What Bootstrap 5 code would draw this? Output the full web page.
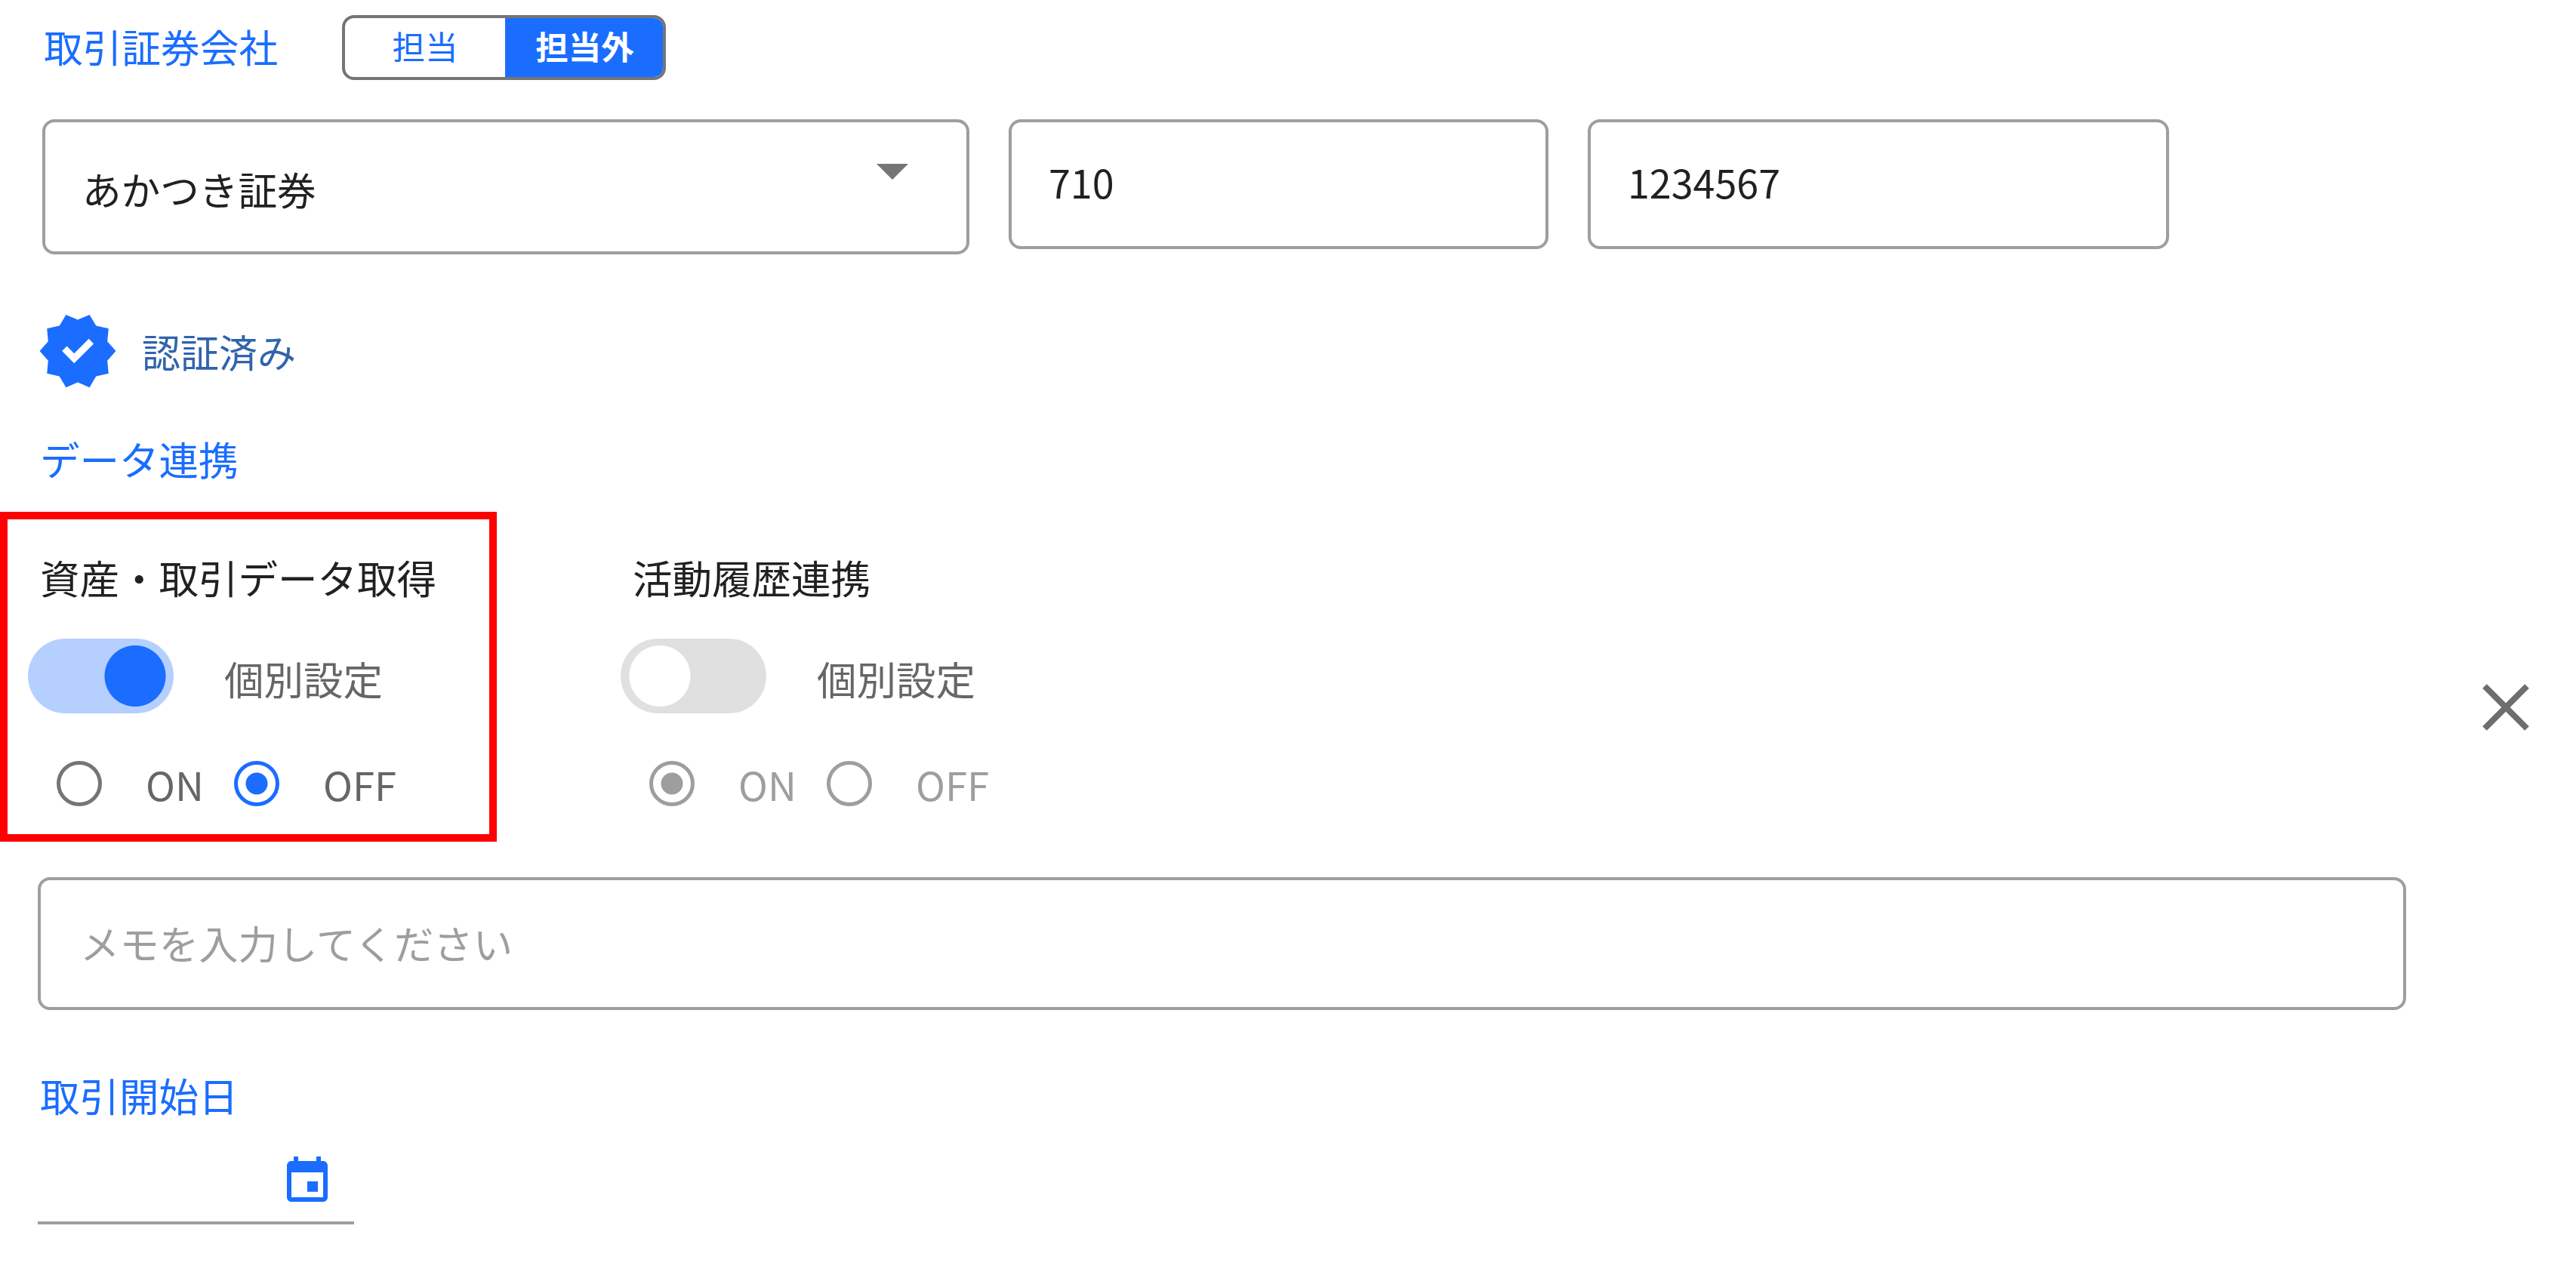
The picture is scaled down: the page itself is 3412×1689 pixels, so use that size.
<!DOCTYPE html>
<html lang="ja">
<head>
    <meta charset="UTF-8">
    <meta name="viewport" content="width=device-width, initial-scale=1.0">
    <title>取引証券会社</title>
    <link href="https://cdn.jsdelivr.net/npm/bootstrap@5.3.3/dist/css/bootstrap.min.css" rel="stylesheet">
    <style>
        body {
            font-family: "Noto Sans CJK JP", "Noto Sans", sans-serif;
            font-size: 52.5px;
            line-height: 60px;
            color: #212121;
            background-color: #fff;
            overflow: hidden;
        }

        .form-area {
            width: 3187px;
            padding-top: 20px;
        }

        .section-title {
            font-size: inherit;
            line-height: 60px;
            font-weight: 400;
            color: #1a6dff;
            margin: 0;
        }

        /* 担当 / 担当外 */
        .company-head {
            height: 86px;
            padding-left: 58px;
        }
        .company-head .section-title {
            width: 395px;
            font-size: 51.7px;
            padding-bottom: 4px;
        }
        .tanto-toggle {
            width: 429px;
            height: 86px;
            border: 4px solid #757575;
            border-radius: 16px;
            overflow: hidden;
        }
        .tanto-toggle .btn {
            width: 212px;
            border: 0;
            border-radius: 0;
            padding: 0 0 4px;
            font-size: 43.5px;
            line-height: 72px;
            color: #1a6dff;
        }
        .tanto-toggle .btn.active {
            width: 209px;
            background-color: #1a6dff;
            color: #fff;
            font-weight: 700;
            padding-left: 2px;
        }

        .company-row {
            margin-top: 52px;
            padding-left: 56px;
            gap: 52px;
        }
        .company-select,
        .field-box {
            border: 4px solid #9e9e9e;
            border-radius: 16px;
            font-size: 52px;
            color: #212121;
            background-color: #fff;
        }
        .company-select {
            width: 1228px;
            height: 179px;
            font-size: 51.6px;
            padding: 4px 77px 0 49px;
        }
        .company-select svg {
            width: 42px;
            height: 21px;
            margin-top: -45px;
        }
        .field-box {
            height: 172px;
            padding: 0 49px 8px;
        }
        .field-branch { width: 715px; }
        .field-account { width: 770px; }

        .verified-row {
            height: 110px;
            margin-top: 73px;
            padding-left: 48px;
            gap: 30px;
            font-size: 51px;
            color: #3163ad;
        }

        .link-title {
            margin-top: 57px;
            padding-left: 53px;
        }

        /* データ連携 */
        .link-row {
            margin-top: 41px;
            gap: 127px;
        }
        .link-panel {
            width: 658px;
            height: 437px;
            border: 10px solid transparent;
            padding: 46px 0 0 27px;
        }
        .link-panel.highlight { border-color: #f00; }
        .link-panel h3 {
            font-size: 52.5px;
            line-height: 60px;
            font-weight: 400;
            margin: 0 0 52px 16px;
            white-space: nowrap;
        }
        .switch-line {
            height: 99px;
            gap: 67px;
            color: #666;
        }
        .switch-line .form-check-input {
            width: 193px;
            height: 99px;
            margin: 0;
            border: 0;
            border-radius: 50px;
            background-color: #e0e0e0;
            background-image: radial-gradient(circle at 52px 50%, #fff 40px, transparent 41px);
            background-position: 0 0;
            background-size: 100% 100%;
        }
        .switch-line .form-check-input:checked {
            background-color: #b5cfff;
            background-image: radial-gradient(circle at 142px 50%, #1a6dff 40px, transparent 41px);
        }
        .radio-line {
            margin: 63px 0 0 38px;
            color: #666;
        }
        .radio-line .form-check {
            width: 235px;
            height: 60px;
            min-height: 0;
            padding: 0;
            margin: 0;
            gap: 58px;
        }
        .radio-line .form-check-input {
            float: none;
            width: 60px;
            height: 60px;
            margin: 0;
            border: 5px solid #757575;
            background-color: #fff;
            background-image: none;
            background-origin: border-box;
            background-size: 100% 100%;
        }
        .radio-line .form-check-input:checked {
            border-color: #1a6dff;
            background-image: radial-gradient(circle at center, #1a6dff 14px, transparent 15px);
        }
        .radio-line .form-check-input:disabled { border-color: #9e9e9e; opacity: 1; }
        .radio-line .form-check-input:disabled:checked {
            background-image: radial-gradient(circle at center, #9e9e9e 14px, transparent 15px);
        }
        .radio-line .form-check-input:disabled ~ .form-check-label { color: #9e9e9e; opacity: 1; }

        .memo-field {
            width: 3137px;
            height: 176px;
            margin: 47px 0 0 50px;
            padding: 0 52px 4px;
            font-size: 52.4px;
        }
        .memo-field::placeholder { color: #9e9e9e; opacity: 1; }

        .date-title {
            margin-top: 82px;
            padding-left: 53px;
        }
        .date-field {
            width: 419px;
            height: 103px;
            margin: 39px 0 0 50px;
            padding: 10px 26px 0 0;
            border-bottom: 4px solid #9e9e9e;
        }

        .remove-btn {
            width: 62px;
            height: 62px;
            margin: 906px 62px 0 auto;
            padding: 0;
            border: 0;
        }
    </style>
</head>
<body>
    <div class="d-flex align-items-start">
        <form class="form-area flex-shrink-0">
            <div class="company-head d-flex align-items-center">
                <h2 class="section-title">取引証券会社</h2>
                <div class="tanto-toggle d-flex" role="group">
                    <button type="button" class="btn">担当</button>
                    <button type="button" class="btn active">担当外</button>
                </div>
            </div>

            <div class="company-row d-flex align-items-start">
                <div class="company-select d-flex align-items-center justify-content-between" role="combobox" tabindex="0">
                    <span>あかつき証券</span>
                    <svg viewBox="0 0 42 21"><path d="M0 0h42L21 21z" fill="#757575"/></svg>
                </div>
                <input type="text" class="form-control field-box field-branch" value="710">
                <input type="text" class="form-control field-box field-account" value="1234567">
            </div>

            <div class="verified-row d-flex align-items-center">
                <svg width="110" height="110" viewBox="0 0 24 24">
                    <path fill="#1a6dff" d="m8.6 22.5-1.9-3.2-3.6-.8.35-3.7L1 12l2.45-2.8-.35-3.7 3.6-.8 1.9-3.2L12 2.95l3.4-1.45 1.9 3.2 3.6.8-.35 3.7L23 12l-2.45 2.8.35 3.7-3.6.8-1.9 3.2-3.4-1.45Z"/>
                    <path fill="#fff" d="m10.95 15.55 5.65-5.65-1.4-1.45-4.25 4.25-2.1-2.1-1.4 1.4Z"/>
                </svg>
                <span>認証済み</span>
            </div>

            <h2 class="section-title link-title">データ連携</h2>

            <div class="link-row d-flex">
                <div class="link-panel highlight">
                    <h3>資産・取引データ取得</h3>
                    <div class="switch-line d-flex align-items-center">
                        <input class="form-check-input" type="checkbox" role="switch" id="assetSwitch" checked>
                        <label class="pt-1" for="assetSwitch">個別設定</label>
                    </div>
                    <div class="radio-line d-flex">
                        <div class="form-check d-flex align-items-center">
                            <input class="form-check-input" type="radio" name="asset" id="assetOn">
                            <label class="form-check-label" for="assetOn">ON</label>
                        </div>
                        <div class="form-check d-flex align-items-center">
                            <input class="form-check-input" type="radio" name="asset" id="assetOff" checked>
                            <label class="form-check-label" for="assetOff">OFF</label>
                        </div>
                    </div>
                </div>

                <div class="link-panel">
                    <h3>活動履歴連携</h3>
                    <div class="switch-line d-flex align-items-center">
                        <input class="form-check-input" type="checkbox" role="switch" id="historySwitch">
                        <label class="pt-1" for="historySwitch">個別設定</label>
                    </div>
                    <div class="radio-line d-flex">
                        <div class="form-check d-flex align-items-center">
                            <input class="form-check-input" type="radio" name="history" id="historyOn" checked disabled>
                            <label class="form-check-label" for="historyOn">ON</label>
                        </div>
                        <div class="form-check d-flex align-items-center">
                            <input class="form-check-input" type="radio" name="history" id="historyOff" disabled>
                            <label class="form-check-label" for="historyOff">OFF</label>
                        </div>
                    </div>
                </div>
            </div>

            <input type="text" class="form-control field-box memo-field" placeholder="メモを入力してください">

            <h2 class="section-title date-title">取引開始日</h2>
            <div class="date-field d-flex justify-content-end">
                <svg width="72" height="72" viewBox="0 0 24 24">
                    <path fill="#1a6dff" d="M16.7 12H12v4.6h4.7zM16 1v2H8V1H6v2H5c-1.1 0-2 .9-2 2v14c0 1.1.9 2 2 2h14c1.1 0 2-.9 2-2V5c0-1.1-.9-2-2-2h-1V1zm3 18H5V8h14z"/>
                </svg>
            </div>
        </form>

        <button type="button" class="btn remove-btn d-flex" aria-label="削除">
            <svg width="62" height="62" viewBox="0 0 62 62"><path d="M3 3l56 56M59 3L3 59" stroke="#6e6e6e" stroke-width="8"/></svg>
        </button>
    </div>
    <script src="https://cdn.jsdelivr.net/npm/bootstrap@5.3.3/dist/js/bootstrap.bundle.min.js"></script>
</body>
</html>
